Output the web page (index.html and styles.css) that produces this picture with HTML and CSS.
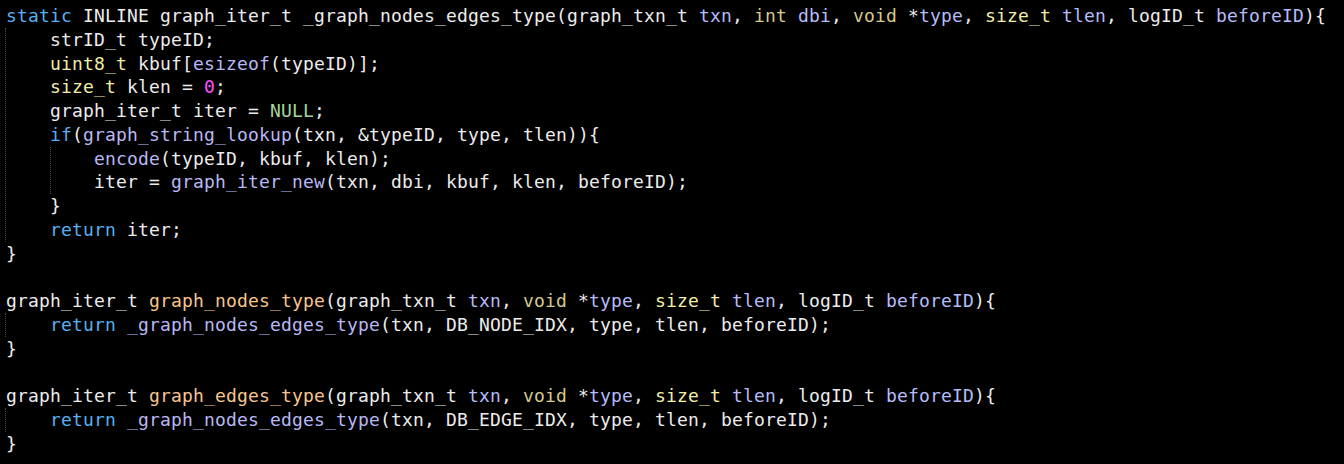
FILE: index.html
```html
<!DOCTYPE html>
<html>
<head>
<meta charset="utf-8">
<link rel="stylesheet" href="styles.css">
</head>
<body>
<div class="editor">
<div class="ln"><span class="k">static</span> INLINE graph_iter_t _graph_nodes_edges_type(graph_txn_t <span class="p">txn</span>, <span class="v">int</span> <span class="p">dbi</span>, <span class="v">void</span> *<span class="p">type</span>, <span class="t">size_t</span> <span class="p">tlen</span>, logID_t <span class="p">beforeID</span>){</div>
<div class="block">
<div class="ln">strID_t typeID;</div>
<div class="ln"><span class="t">uint8_t</span> kbuf[<span class="c">esizeof</span>(typeID)];</div>
<div class="ln"><span class="t">size_t</span> klen = <span class="num">0</span>;</div>
<div class="ln">graph_iter_t iter = <span class="nl">NULL</span>;</div>
<div class="ln"><span class="k">if</span>(<span class="c">graph_string_lookup</span>(txn, &amp;typeID, type, tlen)){</div>
<div class="block inner">
<div class="ln"><span class="c">encode</span>(typeID, kbuf, klen);</div>
<div class="ln">iter = <span class="c">graph_iter_new</span>(txn, dbi, kbuf, klen, beforeID);</div>
</div>
<div class="ln">}</div>
<div class="ln"><span class="k">return</span> iter;</div>
</div>
<div class="ln">}</div>
<div class="ln"> </div>
<div class="ln">graph_iter_t <span class="f">graph_nodes_type</span>(graph_txn_t <span class="p">txn</span>, <span class="v">void</span> *<span class="p">type</span>, <span class="t">size_t</span> <span class="p">tlen</span>, logID_t <span class="p">beforeID</span>){</div>
<div class="block">
<div class="ln"><span class="k">return</span> <span class="c">_graph_nodes_edges_type</span>(txn, DB_NODE_IDX, type, tlen, beforeID);</div>
</div>
<div class="ln">}</div>
<div class="ln"> </div>
<div class="ln">graph_iter_t <span class="f">graph_edges_type</span>(graph_txn_t <span class="p">txn</span>, <span class="v">void</span> *<span class="p">type</span>, <span class="t">size_t</span> <span class="p">tlen</span>, logID_t <span class="p">beforeID</span>){</div>
<div class="block">
<div class="ln"><span class="k">return</span> <span class="c">_graph_nodes_edges_type</span>(txn, DB_EDGE_IDX, type, tlen, beforeID);</div>
</div>
<div class="ln">}</div>
</div>
</body>
</html>
```
FILE: styles.css
```css
html, body {
  margin: 0;
  padding: 0;
  background: #000000;
}
.editor {
  padding: 4px 0 0 6px;
  font-family: "DejaVu Sans Mono", "Liberation Mono", monospace;
  font-size: 18px;
  letter-spacing: 0.163px;
  line-height: 23.78px;
  color: #ececec;
}
.ln {
  white-space: pre;
  height: 23.78px;
}
.block {
  margin-left: -1px;
  border-left: 1px dotted #4a4a4a;
  padding-left: 44px;
}
.block.inner {
  margin-left: 0;
  padding-left: 43px;
}
.k { color: #56b0f0; }
.p { color: #b6bcfa; }
.c { color: #b8b8f4; }
.v { color: #d4ca8c; }
.t { color: #f2eea8; }
.f { color: #f8c48e; }
.nl { color: #a6d49e; }
.num { color: #ff50ff; }
```
